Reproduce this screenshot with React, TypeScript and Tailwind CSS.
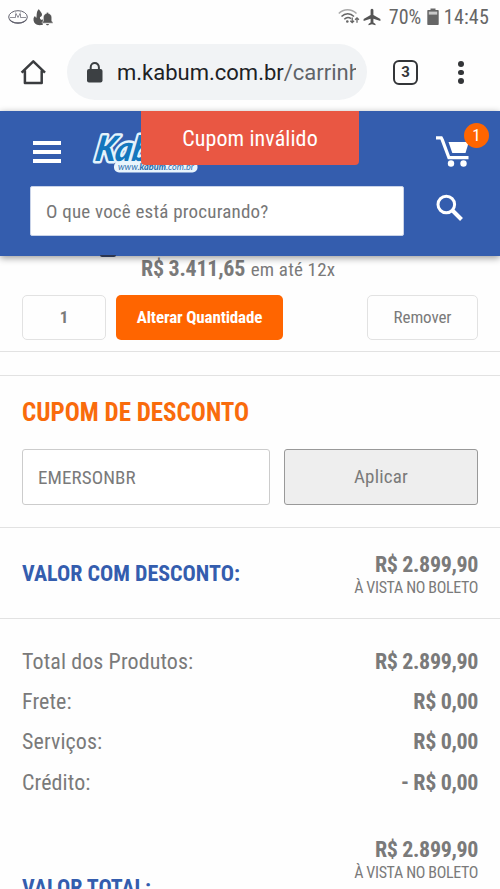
import clsx from 'clsx'

const summary = [
  { label: 'Total dos Produtos:', value: 'R$ 2.899,90' },
  { label: 'Frete:', value: 'R$ 0,00' },
  { label: 'Serviços:', value: 'R$ 0,00' },
  { label: 'Crédito:', value: '- R$ 0,00' },
]

function StatusBar() {
  return (
    <div className="flex h-[34px] shrink-0 items-center justify-between pl-2 pr-[11px] text-[#666]">
      <div className="flex items-center gap-[5px]">
        <svg width="20" height="16" viewBox="0 0 20 16" fill="none" stroke="#62626e">
          <ellipse cx="10" cy="8" rx="9.3" ry="6.3" strokeWidth="1" />
          <path d="M1.500 10.500c3 4.500 14 4.500 17 0" strokeWidth="1.200" />
          <path d="M2 8.500h5.500V5M18 8.500h-5.500V5M7.500 3.500l2.500 5 2.500-5" strokeWidth=".7" />
        </svg>
        <svg width="20" height="17" viewBox="0 0 20 17" fill="#555">
          <path d="M5 1c0-.6 1-.6 1.400 0 .8 1.500 2.600 2.700 2.600 4.500C9 7 8 8 7 8c-.3 1.500.3 2.700 2 3l1-1v5.500c-1 .7-4 .9-6 .2C1.500 14.800.3 12.500.5 10c.1-1.300.8-2.500 1.500-3 .3 1 .8 1.600 1.500 1.800C3.800 7 3.300 3 5 1z" />
          <path d="M14.500 3.300c.7 0 1 .5 1 1 2.300.6 3.300 2.300 3.300 4.500v3.200l1.200 1.600v.6H9.200v-.6l1.100-1.600V8.800c0-2.200 1-3.900 3.200-4.500 0-.5.300-1 1-1z" stroke="#fdfdfd" strokeWidth=".6" />
          <path d="M13 15h3c-.3 1.700-2.700 1.700-3 0z" />
        </svg>
      </div>
      <div className="flex items-center">
        <svg width="23" height="18" viewBox="0 0 23 18" fill="none" stroke="#666" strokeWidth="1.500">
          <path d="M.8 5.500C5.500.5 13.500.5 18.500 5.500" stroke="#aaa" />
          <path d="M3.500 8.500c3.500-3.700 9-3.700 12.500 0M6.300 11.300c2-2 4.700-2.200 6.700-.6" />
          <circle cx="9.300" cy="13.500" r="1.300" fill="#666" stroke="none" />
          <path d="M14.200 9.500v5m-1.900-1.800 1.900 1.900 1.900-1.900M19 14.800v-5m-1.900 1.900L19 9.800l1.900 1.900" strokeWidth="1.300" />
        </svg>
        <svg className="ml-[2px]" width="18" height="18" viewBox="0 0 18 18" fill="#555">
          <path d="M9 .8c.9 0 1.400.8 1.400 1.700v4.400l7 4.100v1.900l-7-2.100v3.600l2.100 1.500v1.300L9 16.300l-3.500.9v-1.300l2.100-1.500v-3.600l-7 2.100V11l7-4.100V2.500C7.600 1.600 8.100.8 9 .8z" />
        </svg>
        <span className="ml-[8px] w-[33px] text-[20px] leading-[24px]">70%</span>
        <svg className="ml-[5px]" width="12" height="18" viewBox="0 0 12 18">
          <path d="M3.500.5h5V2H11q.7 0 .7.700v13.600q0 .7-.7.700H1q-.7 0-.7-.7V2.700Q.3 2 1 2h2.500z" fill="#666" />
          <path d="M1.800 3.600h8.400v3H1.800z" fill="#c9c9c9" />
        </svg>
        <span className="ml-[5px] text-[20px] leading-[24px] tracking-[0.2px]">14:45</span>
      </div>
    </div>
  )
}

function BrowserBar() {
  return (
    <div className="flex h-[77px] shrink-0 items-start pt-[10px]">
      <svg className="ml-[20px] mt-[15px]" width="27" height="27" viewBox="0 0 27 27" fill="none" stroke="#3a3c3f" strokeWidth="2.500">
        <path d="M1.600 13.700 13.300 2.400 25 13.700M4.900 11.500v12.600h16.800V11.500" strokeLinejoin="round" />
      </svg>
      <div className="ml-[20px] flex h-[56px] w-[300px] items-center rounded-full bg-[#f1f3f5] pl-[20px]">
        <svg width="16" height="21" viewBox="0 0 16 21">
          <rect y="7" width="15.500" height="13.500" rx="2" fill="#3c4043" />
          <path d="M3.700 8V5.200a4.100 4.100 0 0 1 8.200 0V8" fill="none" stroke="#3c4043" strokeWidth="2" />
        </svg>
        <div className="ml-[14px] mt-[2px] w-[239px] overflow-hidden whitespace-nowrap font-['Roboto'] text-[22px] leading-[30px] text-[#202124]">
          m.kabum.com.br<span className="text-[#5f6368]">/carrinho</span>
        </div>
      </div>
      <div className="ml-[26px] mt-[16px] flex h-[25px] w-[25px] items-center justify-center rounded-[6px] border-[2.500px] border-[#333538] font-['Roboto'] text-[15px] font-bold text-[#333538]">
        3
      </div>
      <div className="ml-[40px] mt-[17px] flex flex-col gap-[3px]">
        <i className="size-[5.500px] rounded-full bg-[#333538]" />
        <i className="size-[5.500px] rounded-full bg-[#333538]" />
        <i className="size-[5.500px] rounded-full bg-[#333538]" />
      </div>
    </div>
  )
}

function Logo() {
  return (
    <svg className="ml-[30px] mt-[18px]" width="108" height="46" viewBox="0 0 108 46">
      <g fontFamily="Lato, sans-serif" fontStyle="italic" fontWeight="900" strokeLinejoin="round">
        <text
          transform="translate(3 31.500) skewX(-10)"
          fontSize="35"
          textLength="54"
          lengthAdjust="spacingAndGlyphs"
          fill="#1377bd"
          stroke="#e4f3fc"
          strokeWidth="5"
          paintOrder="stroke"
        >
          Kab
        </text>
        <rect x="23" y="32.500" width="83.500" height="11" rx="5" fill="#e9f5fd" />
        <text x="27" y="41" fontSize="10" textLength="76" lengthAdjust="spacingAndGlyphs" fill="#2c6fae">
          <tspan fontWeight="400">www.</tspan>kabum<tspan fontWeight="400">.com.br</tspan>
        </text>
      </g>
    </svg>
  )
}

function Header() {
  return (
    <header className="relative z-10 h-[144.500px] shrink-0 bg-[#345dae] shadow-[0_2px_7px_rgba(0,0,0,0.4)]">
      <div className="flex h-[75px] items-start">
        <div className="ml-[33px] mt-[30px] flex w-[28px] flex-col gap-[5px]">
          <i className="h-[4px] bg-white" />
          <i className="h-[4px] bg-white" />
          <i className="h-[4px] bg-white" />
        </div>
        <Logo />
        <div className="relative ml-auto mr-[11px] mt-[12px] h-[45px] w-[53px]">
          <svg className="mt-[13px]" width="34" height="32" viewBox="0 0 34 32" fill="#fff">
            <path d="M0 .2h6.200l1.600 3L14 20h18.500v3.300H11.800L4.400 3.600H0z" />
            <path d="M12.500 6h20.300l-3.300 11H16.300z" />
            <circle cx="15" cy="27.500" r="3.200" />
            <circle cx="27.500" cy="27.500" r="3.200" />
          </svg>
          <span className="absolute right-0 top-0 flex size-[25px] items-center justify-center rounded-full bg-[#ff6500] text-[17px] leading-none text-white">
            1
          </span>
        </div>
      </div>
      <div className="flex">
        <input
          placeholder="O que você está procurando?"
          className="ml-[30px] h-[50px] w-[374px] rounded-[2px] border border-[#c9d3e8] bg-white pl-[15px] text-[19px] tracking-[0.2px] placeholder:text-[#777]"
        />
        <svg className="ml-[32px] mt-[8px]" width="28" height="28" viewBox="0 0 28 28" fill="none" stroke="#fff">
          <circle cx="10.300" cy="10.500" r="8.300" strokeWidth="3" />
          <path d="m16.500 16.500 9 9" strokeWidth="4" />
        </svg>
      </div>
      <div className="absolute left-[141px] top-0 flex h-[54px] w-[218px] items-center justify-center rounded-b-[4px] bg-[#e95743] text-[22px] tracking-[0.1px] text-white">
        Cupom inválido
      </div>
    </header>
  )
}

function Total({ label, className, labelClassName }: { label: string; className?: string; labelClassName?: string }) {
  return (
    <div className={clsx('flex items-center justify-between px-[22px]', className)}>
      <h2 className={clsx('text-[22px] font-bold text-[#345dae]', labelClassName)}>{label}</h2>
      <div className="pt-[2px] text-right">
        <div className="text-[22px] font-bold leading-[26px] tracking-[-0.35px]">R$ 2.899,90</div>
        <div className="text-[16px] leading-[19px] tracking-[-0.35px]">À VISTA NO BOLETO</div>
      </div>
    </div>
  )
}

export default function App() {
  return (
    <div className="flex h-[889px] w-[500px] flex-col overflow-hidden bg-[#fefefe] font-['Roboto_Condensed'] text-[#7a7a7a]">
      <StatusBar />
      <BrowserBar />
      <Header />

      <div className="relative h-[96px] shrink-0 border-b border-[#e2e2e2]">
        {/* bottom edge of the product photo, mostly under the header */}
        <i className="absolute -top-px left-[100px] z-20 h-[2px] w-[16px] rounded-b-full bg-[#2b3550]" />
        <div className="flex h-[39.500px] items-start pl-[141px]">
          <p className="whitespace-nowrap text-[19px] leading-[26px] tracking-[0.2px]">
            <b className="mr-px text-[22px] tracking-[-0.25px]">R$ 3.411,65</b> em até 12x
          </p>
        </div>
        <div className="flex h-[45px] px-[22px] text-[17px]">
          <div className="flex w-[84px] items-center justify-center rounded-[5px] border-[1.500px] border-[#e2e2e2] font-bold">1</div>
          <button className="ml-[10px] w-[167px] rounded-[5px] bg-[#ff6500] font-bold tracking-[-0.15px] text-white">Alterar Quantidade</button>
          <button className="ml-auto w-[111px] rounded-[5px] border-[1.500px] border-[#e2e2e2] tracking-[-0.1px]">Remover</button>
        </div>
      </div>

      <section className="mt-[23.500px] h-[153px] shrink-0 border-y border-[#e2e2e2] px-[22px] pt-[21px]">
        <h2 className="text-[25px] font-bold leading-[32px] text-[#f96b0c]">CUPOM DE DESCONTO</h2>
        <div className="mt-[20px] flex gap-[14px] text-[19px]">
          <input
            defaultValue="EMERSONBR"
            className="h-[56px] w-[248px] rounded-[3px] border border-[#ccc] bg-white pl-[15px] tracking-[0.1px]"
          />
          <button className="h-[56px] w-[194px] rounded-[3px] border border-[#999] bg-[#eee] tracking-[0.2px]">Aplicar</button>
        </div>
      </section>

      <Total label="VALOR COM DESCONTO:" className="h-[91px] shrink-0 border-b border-[#e2e2e2]" labelClassName="pt-px" />

      <dl className="h-[184px] shrink-0 px-[22px] pt-[22px] text-[22px]">
        {summary.map(({ label, value }) => (
          <div key={label} className="flex h-[40.300px] items-center justify-between">
            <dt className="tracking-[0.1px]">{label}</dt>
            <dd className="font-bold tracking-[-0.35px]">{value}</dd>
          </div>
        ))}
      </dl>

      <Total label="VALOR TOTAL:" className="mt-[11px] shrink-0" labelClassName="pt-[57px] -mb-[2px]" />
    </div>
  )
}
